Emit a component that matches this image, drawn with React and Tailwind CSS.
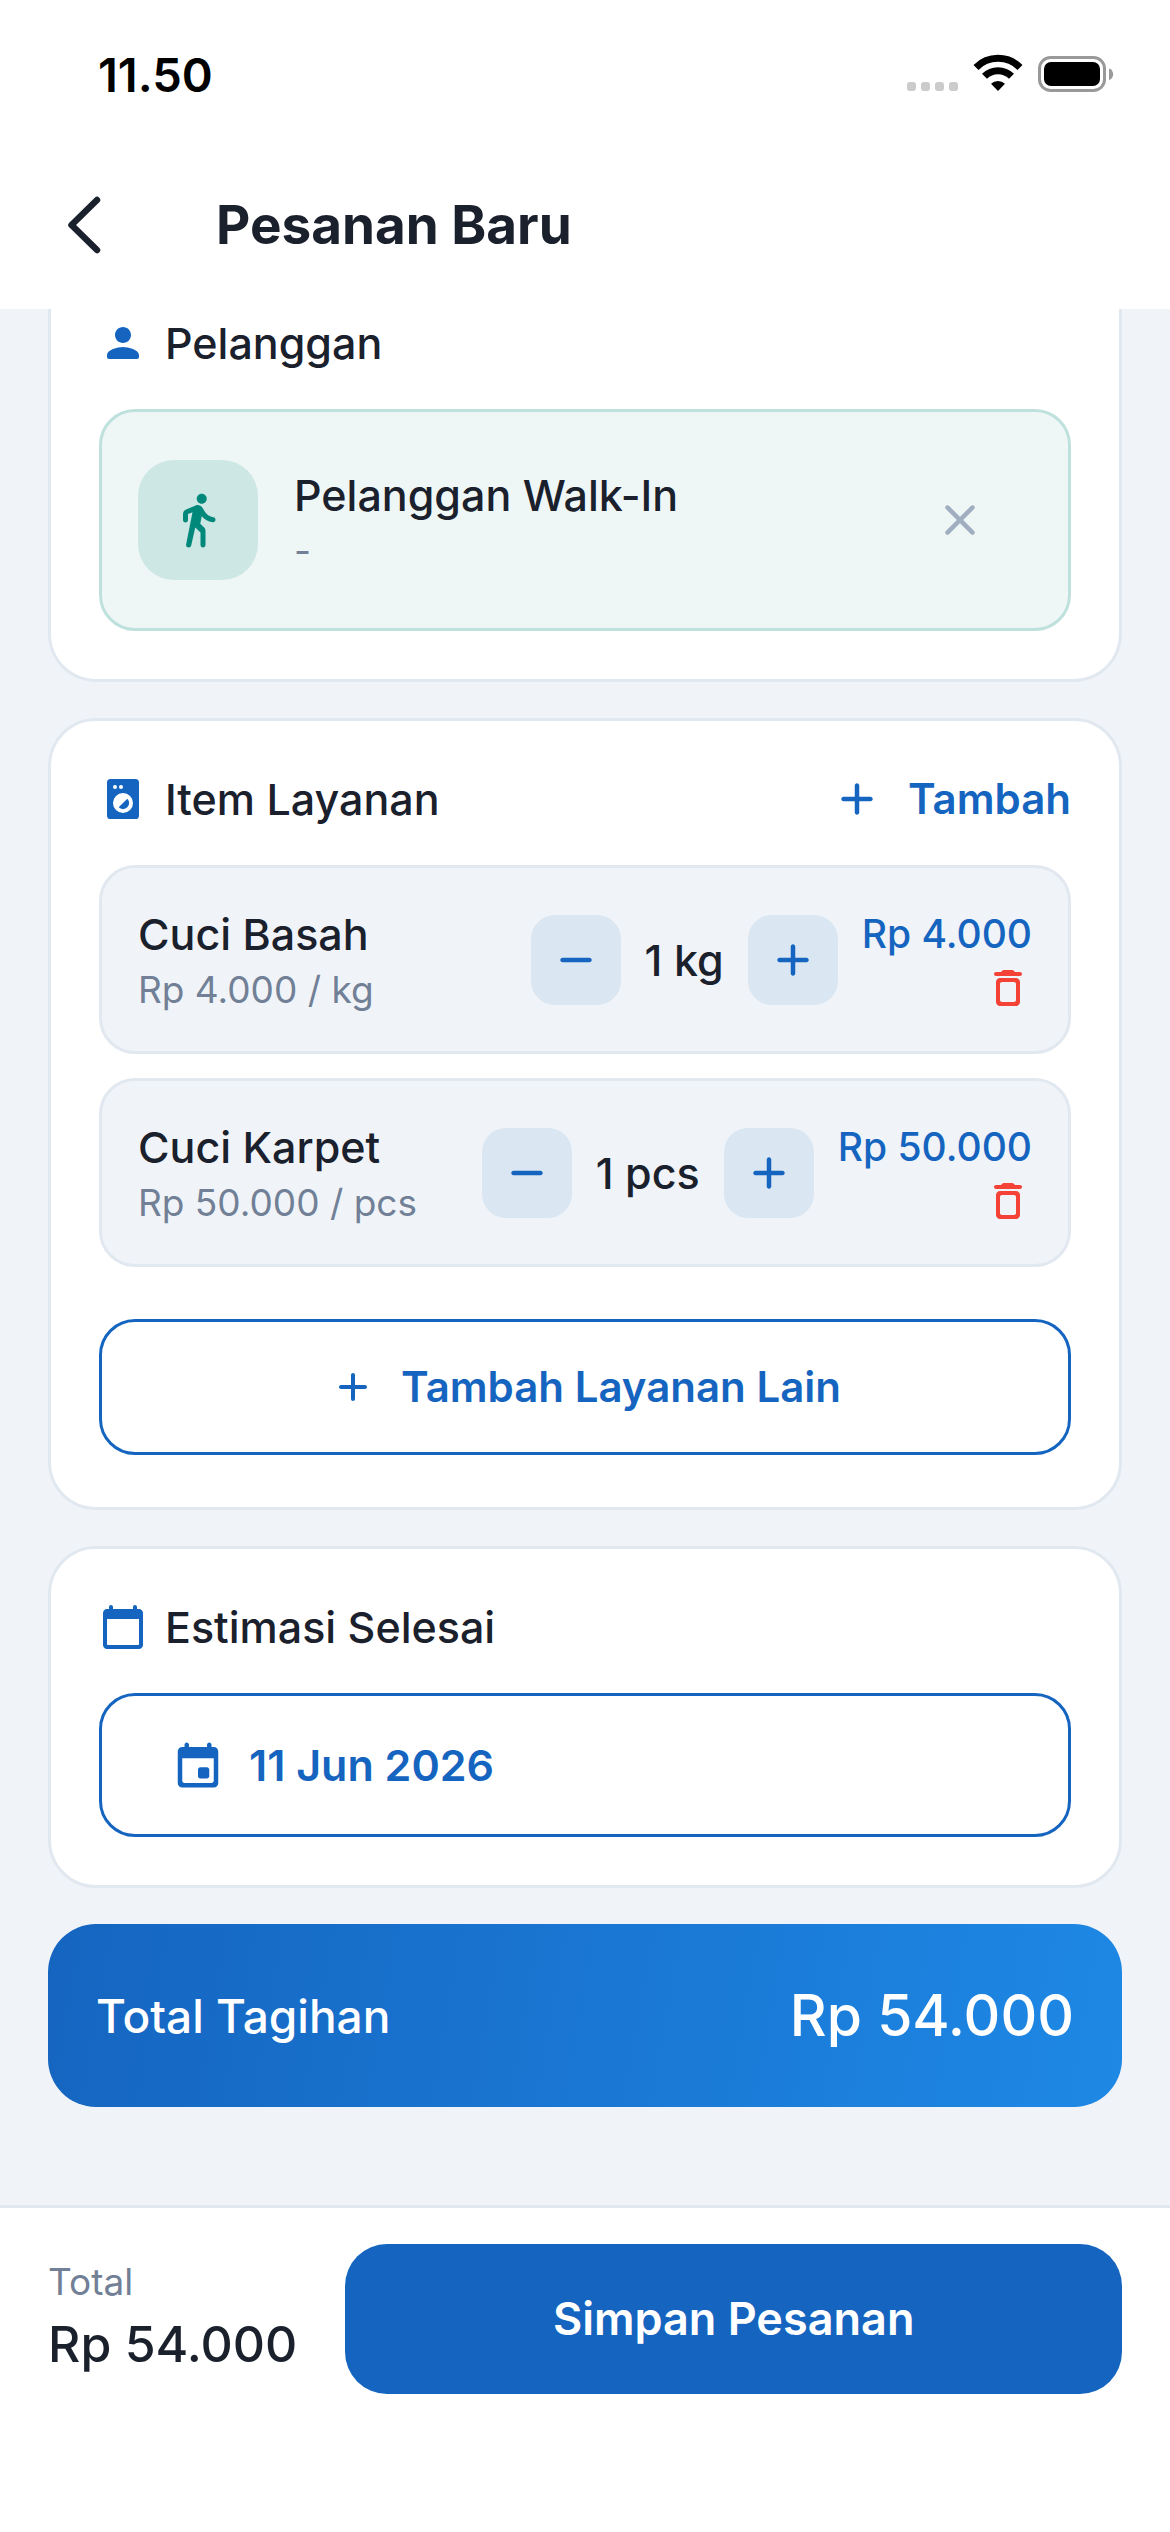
import React, { useState } from 'react';

const rupiah = (value) => `Rp ${value.toLocaleString('id-ID')}`;

const ICONS = {
    person: 'M12 12c2.21 0 4-1.79 4-4s-1.79-4-4-4-4 1.79-4 4 1.79 4 4 4zm0 2c-2.67 0-8 1.34-8 4v1c0 .55.45 1 1 1h14c.55 0 1-.45 1-1v-1c0-2.66-5.33-4-8-4z',
    walk: 'M13.5 5.5c1.1 0 2-.9 2-2s-.9-2-2-2-2 .9-2 2 .9 2 2 2zM9.8 8.9L7.24 21.81c-.13.61.35 1.19.98 1.19h.08c.47 0 .87-.32.98-.78L10.9 15l2.1 2v5c0 .55.45 1 1 1s1-.45 1-1v-5.64c0-.55-.22-1.07-.62-1.45L12.9 13.5l.6-3c1.07 1.24 2.62 2.13 4.36 2.41.6.09 1.14-.39 1.14-1 0-.49-.36-.9-.84-.98-1.53-.25-2.8-1.16-3.46-2.33l-1-1.6c-.56-.89-1.68-1.25-2.65-.84L7.22 7.78C6.48 8.1 6 8.82 6 9.63V12c0 .55.45 1 1 1s1-.45 1-1V9.6l1.8-.7z',
    calendar: 'M20 3h-1V2c0-.55-.45-1-1-1s-1 .45-1 1v1H7V2c0-.55-.45-1-1-1s-1 .45-1 1v1H4c-1.1 0-2 .9-2 2v16c0 1.1.9 2 2 2h16c1.1 0 2-.9 2-2V5c0-1.1-.9-2-2-2zm-.5 18h-15c-.28 0-.5-.22-.5-.5V8h16v12.5c0 .28-.22.5-.5.5z',
    event: 'M16 13h-3c-.55 0-1 .45-1 1v3c0 .55.45 1 1 1h3c.55 0 1-.45 1-1v-3c0-.55-.45-1-1-1zm0-10v1H8V3c0-.55-.45-1-1-1s-1 .45-1 1v1H5c-1.11 0-1.99.9-1.99 2L3 20c0 1.1.89 2 2 2h14c1.1 0 2-.9 2-2V6c0-1.1-.9-2-2-2h-1V3c0-.55-.45-1-1-1s-1 .45-1 1zm2 17H6c-.55 0-1-.45-1-1V9h14v10c0 .55-.45 1-1 1z',
    trash: 'M6 19c0 1.1.9 2 2 2h8c1.1 0 2-.9 2-2V9c0-1.1-.9-2-2-2H8c-1.1 0-2 .9-2 2v10zM9 9h6c.55 0 1 .45 1 1v8c0 .55-.45 1-1 1H9c-.55 0-1-.45-1-1v-8c0-.55.45-1 1-1zm6.5-5l-.71-.71c-.18-.18-.44-.29-.7-.29H9.91c-.26 0-.52.11-.7.29L8.5 4H6c-.55 0-1 .45-1 1s.45 1 1 1h12c.55 0 1-.45 1-1s-.45-1-1-1h-2.5z',
    plus: 'M18 13h-5v5c0 .55-.45 1-1 1s-1-.45-1-1v-5H6c-.55 0-1-.45-1-1s.45-1 1-1h5V6c0-.55.45-1 1-1s1 .45 1 1v5h5c.55 0 1 .45 1 1s-.45 1-1 1z',
    minus: 'M18 13H6c-.55 0-1-.45-1-1s.45-1 1-1h12c.55 0 1 .45 1 1s-.45 1-1 1z',
    close: 'M18.3 5.71c-.39-.39-1.02-.39-1.41 0L12 10.59 7.11 5.7c-.39-.39-1.02-.39-1.41 0-.39.39-.39 1.02 0 1.41L10.59 12 5.7 16.89c-.39.39-.39 1.02 0 1.41.39.39 1.02.39 1.41 0L12 13.41l4.89 4.89c.39.39 1.02.39 1.41 0 .39-.39.39-1.02 0-1.41L13.41 12l4.89-4.89c.38-.38.38-1.02 0-1.4z',
};

const Icon = ({ name, className }) => (
    <svg viewBox="0 0 24 24" fill="currentColor" aria-hidden="true" className={className}>
        <path fillRule="evenodd" d={ICONS[name]} />
    </svg>
);

const WasherIcon = () => (
    <svg viewBox="0 0 24 24" aria-hidden="true" className="size-12">
        <rect x="4" y="2" width="16" height="20" rx="1.8" fill="#1565c0" />
        <circle cx="8" cy="6" r="1" fill="#fff" />
        <circle cx="11" cy="6" r="1" fill="#fff" />
        <circle cx="12" cy="14" r="5" fill="#fff" />
        <path d="M9.83 16.17a3.07 3.07 0 0 0 4.34 0a3.07 3.07 0 0 0 0-4.34z" fill="#1565c0" />
    </svg>
);

const StatusBar = () => (
    <div className="flex h-[141px] items-start justify-between pt-12 pr-14 pl-[98px]">
        <span className="text-[47px] leading-[54px] font-semibold text-black">11.50</span>
        <svg viewBox="0 0 208 40" className="mt-1.5 h-10 w-[208px]" aria-hidden="true">
            <g fill="#cbcbcb">
                <rect x="1" y="28" width="9" height="9" rx="3" />
                <rect x="15" y="28" width="9" height="9" rx="3" />
                <rect x="29" y="28" width="9" height="9" rx="3" />
                <rect x="43" y="28" width="9" height="9" rx="3" />
            </g>
            <g fill="none" stroke="#000" strokeWidth="7">
                <path d="M70 13.5a31 31 0 0 1 44 0" />
                <path d="M78.5 22.3a19 19 0 0 1 27 0" />
            </g>
            <path d="M92 37l-7-7.3a10.5 10.5 0 0 1 14 0z" />
            <rect x="133.5" y="3.5" width="65" height="33" rx="11" fill="none" stroke="#999" strokeWidth="3" />
            <rect x="138" y="8" width="56" height="24" rx="7" />
            <path d="M203 14.5c5.5 1.5 5.5 10 0 11.5z" fill="#999" />
        </svg>
    </div>
);

const SectionTitle = ({ icon, children }) => (
    <h2 className="flex items-center gap-[18px] text-[43px] leading-[60px] font-medium">
        <span className="text-[#1565c0]">{icon}</span>
        {children}
    </h2>
);

const StepButton = ({ icon, label, onClick }) => (
    <button
        onClick={onClick}
        aria-label={label}
        className="flex size-[90px] items-center justify-center rounded-3xl bg-[#dae6f2] text-[#1565c0]"
    >
        <Icon name={icon} className="size-[54px]" />
    </button>
);

const ServiceItem = ({ item, onChange, onRemove }) => (
    <li className="flex items-center gap-6 rounded-[36px] border-3 border-[#e2e8f0] bg-[#f0f4f8] p-9">
        <div className="min-w-0 flex-1">
            <p className="text-[43px] leading-[60px] font-medium">{item.name}</p>
            <p className="text-[37px] leading-[51px] text-[#718096]">
                {rupiah(item.price)} / {item.unit}
            </p>
        </div>
        <StepButton icon="minus" label={`Kurangi ${item.name}`} onClick={() => onChange(item.qty - 1)} />
        <span className="text-[43px] leading-[60px] font-medium">
            {item.qty} {item.unit}
        </span>
        <StepButton icon="plus" label={`Tambah ${item.name}`} onClick={() => onChange(item.qty + 1)} />
        <div className="flex flex-col items-end self-start">
            <span className="text-[39px] leading-[60px] font-medium text-[#1565c0]">
                {rupiah(item.price * item.qty)}
            </span>
            <button onClick={onRemove} aria-label={`Hapus ${item.name}`} className="text-[#f44336]">
                <Icon name="trash" className="size-12" />
            </button>
        </div>
    </li>
);

const App = () => {
    const [items, setItems] = useState([
        { id: 1, name: 'Cuci Basah', price: 4000, unit: 'kg', qty: 1 },
        { id: 2, name: 'Cuci Karpet', price: 50000, unit: 'pcs', qty: 1 },
    ]);

    const total = items.reduce((sum, item) => sum + item.price * item.qty, 0);

    const changeQty = (id, qty) => {
        setItems(items.map((item) => (item.id === id ? { ...item, qty: Math.max(1, qty) } : item)));
    };

    const removeItem = (id) => {
        setItems(items.filter((item) => item.id !== id));
    };

    return (
        <div className="flex min-h-screen flex-col bg-[#f0f4f8] font-[Inter,sans-serif] text-[#1a202c]">
            <header className="bg-white">
                <StatusBar />
                <div className="flex h-[168px] items-center gap-12">
                    <button aria-label="Kembali" className="flex h-full w-[168px] items-center justify-center">
                        <svg viewBox="0 0 40 60" className="h-[60px] w-10" fill="none" stroke="currentColor" strokeWidth="6.5" strokeLinecap="round" strokeLinejoin="round" aria-hidden="true">
                            <path d="M33 5L7.5 30L33 55" />
                        </svg>
                    </button>
                    <h1 className="text-[53px] leading-[72px] font-bold">Pesanan Baru</h1>
                </div>
            </header>

            <main className="flex flex-1 flex-col gap-9 px-12 pb-24">
                <section className="flex flex-col gap-9 rounded-b-[48px] border-3 border-t-0 border-[#e2e8f0] bg-white px-12 pt-1 pb-12">
                    <SectionTitle icon={<Icon name="person" className="size-12" />}>Pelanggan</SectionTitle>
                    <div className="flex items-center gap-9 rounded-[36px] border-3 border-[#bfe1de] bg-[#eef7f6] p-9">
                        <div className="flex size-[120px] items-center justify-center rounded-[36px] bg-[#cde7e4] text-[#00897b]">
                            <Icon name="walk" className="size-[60px]" />
                        </div>
                        <div className="flex-1">
                            <p className="text-[43px] leading-[60px] font-medium">Pelanggan Walk-In</p>
                            <p className="text-[37px] leading-[51px] text-[#718096]">-</p>
                        </div>
                        <button aria-label="Hapus pelanggan" className="flex size-36 items-center justify-center text-[#a0aec0]">
                            <Icon name="close" className="size-[54px]" />
                        </button>
                    </div>
                </section>

                <section className="flex flex-col gap-9 rounded-[48px] border-3 border-[#e2e8f0] bg-white p-12">
                    <div className="flex items-center justify-between">
                        <SectionTitle icon={<WasherIcon />}>Item Layanan</SectionTitle>
                        <button className="flex items-center gap-6 text-[42px] leading-[60px] font-semibold text-[#1565c0]">
                            <Icon name="plus" className="size-[54px]" />
                            Tambah
                        </button>
                    </div>
                    <ul className="flex flex-col gap-6">
                        {items.map((item) => (
                            <ServiceItem
                                key={item.id}
                                item={item}
                                onChange={(qty) => changeQty(item.id, qty)}
                                onRemove={() => removeItem(item.id)}
                            />
                        ))}
                    </ul>
                    <div className="flex pt-4 pb-1">
                        <button className="flex h-[136px] flex-1 items-center justify-center gap-6 rounded-[36px] border-3 border-[#1565c0] text-[42px] leading-[60px] font-semibold text-[#1565c0]">
                            <Icon name="plus" className="size-12" />
                            Tambah Layanan Lain
                        </button>
                    </div>
                </section>

                <section className="flex flex-col gap-9 rounded-[48px] border-3 border-[#e2e8f0] bg-white p-12">
                    <SectionTitle icon={<Icon name="calendar" className="size-12" />}>Estimasi Selesai</SectionTitle>
                    <button className="flex h-36 items-center gap-6 rounded-[36px] border-3 border-[#1565c0] px-[69px] text-[43px] leading-[60px] font-semibold text-[#1565c0]">
                        <Icon name="event" className="size-[54px]" />
                        11 Jun 2026
                    </button>
                </section>

                <section className="flex h-[183px] items-center justify-between rounded-[48px] bg-[linear-gradient(100deg,#1565c0,#1e88e5)] px-12 text-white">
                    <span className="text-[46px] leading-[60px] font-medium">Total Tagihan</span>
                    <span className="text-[57px] leading-[72px] font-medium">{rupiah(total)}</span>
                </section>
            </main>

            <footer className="flex items-center gap-12 border-t-3 border-[#e2e8f0] bg-white px-12 pt-9 pb-[138px]">
                <div>
                    <p className="text-[37px] leading-[51px] text-[#718096]">Total</p>
                    <p className="text-[50px] leading-[75px] font-medium">{rupiah(total)}</p>
                </div>
                <button className="h-[150px] flex-1 rounded-[42px] bg-[#1565c0] text-[45px] leading-[60px] font-semibold text-white">
                    Simpan Pesanan
                </button>
            </footer>
        </div>
    );
};

export default App;
